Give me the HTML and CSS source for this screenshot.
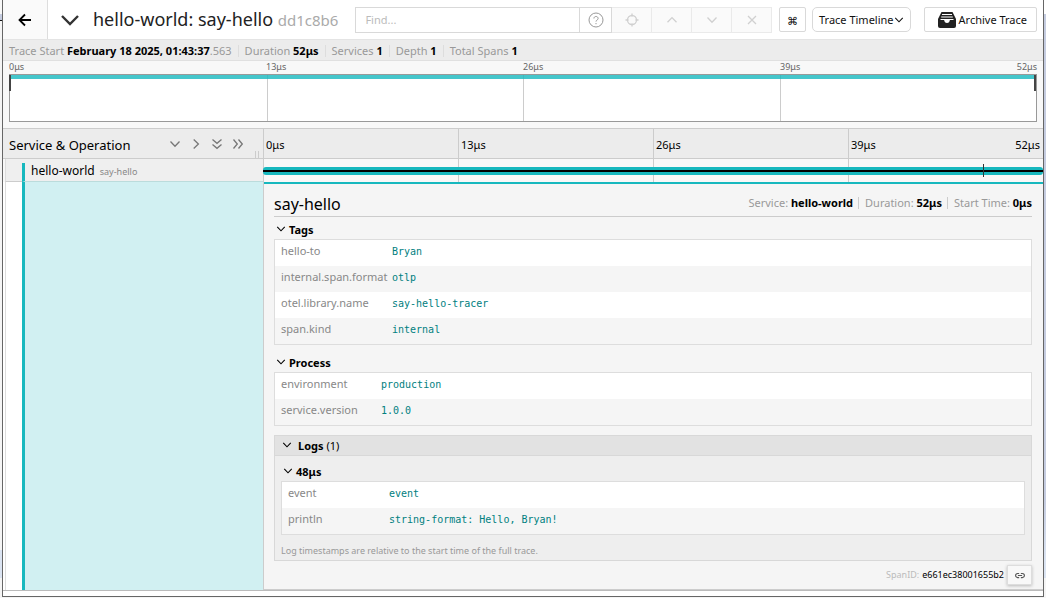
FILE: index.html
```html
<!DOCTYPE html>
<html lang="en">
<head>
<meta charset="utf-8">
<title>hello-world: say-hello</title>
<link rel="stylesheet" href="styles.css">
</head>
<body>
<svg class="defs" aria-hidden="true">
  <symbol id="down" viewBox="0 0 12 12"><path d="M1.5 3.5 6 8.2l4.500-4.700"/></symbol>
  <symbol id="up" viewBox="0 0 12 12"><path d="M1.500 8.300 6 3.600l4.500 4.700"/></symbol>
  <symbol id="right" viewBox="0 0 12 12"><path d="M3.700 1.500 8.400 6l-4.700 4.500"/></symbol>
  <symbol id="ddown" viewBox="0 0 12 12"><path d="M1.500 1.500 6 5.300l4.500-3.800M1.500 6.500 6 10.300l4.500-3.800"/></symbol>
  <symbol id="dright" viewBox="0 0 12 12"><path d="M1.500 1.500 5.300 6l-3.800 4.500M6.500 1.500 10.300 6l-3.800 4.500"/></symbol>
</svg>
<div class="window">
  <header class="top">
    <a class="back" href="#" aria-label="Back"><svg class="ico i14" viewBox="0 0 14 14"><path d="M13 7H1.500M7 1.500 1.500 7 7 12.500"/></svg></a>
    <button class="collapse" aria-label="Collapse header"><svg class="ico i20" viewBox="0 0 20 20"><path d="M2 6l8 8 8-8"/></svg></button>
    <h1 class="title">hello-world: say-hello <small>dd1c8b6</small></h1>
    <div class="search">
      <input class="find" type="text" placeholder="Find..." aria-label="Find">
      <button class="help" aria-label="Help"><svg class="ico i16" viewBox="0 0 16 16"><circle cx="8" cy="8" r="7"/><path d="M5.900 6.500c0-2.700 4.200-2.700 4.200 0 0 1.500-2.100 1.500-2.100 3.100M8 11v1.200"/></svg></button>
      <button class="nav" disabled aria-label="Locate"><svg class="ico i14" viewBox="0 0 14 14"><circle cx="7" cy="7" r="4.500"/><path d="M7 .5v3M7 10.500v3M.5 7h3M10.500 7h3"/></svg></button>
      <button class="nav" disabled aria-label="Previous"><svg class="ico i12"><use href="#up"/></svg></button>
      <button class="nav" disabled aria-label="Next"><svg class="ico i12"><use href="#down"/></svg></button>
      <button class="nav" disabled aria-label="Clear"><svg class="ico i12" viewBox="0 0 12 12"><path d="M2 2l8 8M10 2l-8 8"/></svg></button>
    </div>
    <button class="btn keys" aria-label="Keyboard shortcuts">⌘</button>
    <button class="btn view">Trace Timeline <svg class="ico i10"><use href="#down"/></svg></button>
    <button class="btn archive"><svg class="box" viewBox="0 0 18 16"><path d="M3.500 0h11L18 7v7q0 2-2 2H2q-2 0-2-2V7z" fill="#222"/><path d="M4 2.500h10M3.200 5h11.600M2.500 7.500h13" fill="none" stroke="#fff" stroke-width="1"/><path d="M6 7.500h6q-.5 3.500-3 3.500T6 7.500z" fill="#fff"/></svg>Archive Trace</button>
  </header>
  <ul class="info">
    <li>Trace Start <b>February 18 2025, 01:43:37</b>.563</li>
    <li>Duration <b>52μs</b></li>
    <li>Services <b>1</b></li>
    <li>Depth <b>1</b></li>
    <li>Total Spans <b>1</b></li>
  </ul>
  <section class="overview">
    <div class="labels"><span>0μs</span><span>13μs</span><span>26μs</span><span>39μs</span><span class="last">52μs</span></div>
    <div class="minimap"><i></i><i></i><i></i><i></i><div class="map-span"></div><div class="grip start"></div><div class="grip end"></div></div>
  </section>
  <main class="timeline">
    <div class="row head">
      <div class="name-head"><h2>Service &amp; Operation</h2>
        <div class="tools">
          <button aria-label="Collapse one"><svg class="ico i12"><use href="#down"/></svg></button>
          <button aria-label="Expand one"><svg class="ico i12"><use href="#right"/></svg></button>
          <button aria-label="Collapse all"><svg class="ico i12"><use href="#ddown"/></svg></button>
          <button aria-label="Expand all"><svg class="ico i12"><use href="#dright"/></svg></button>
        </div>
        <span class="resize"></span>
      </div>
      <div class="ticks"><span>0μs</span><span>13μs</span><span>26μs</span><span>39μs</span><span class="last">52μs</span></div>
    </div>
    <div class="row span-row">
      <div class="gutter"></div>
      <div class="span-name">hello-world <small>say-hello</small></div>
      <div class="ticks"><span></span><span></span><span></span><span></span><div class="bar"></div><div class="mark"></div></div>
    </div>
    <div class="row detail-row">
      <div class="gutter"></div>
      <div class="tint"></div>
      <article class="detail">
        <div class="detail-head"><h2>say-hello</h2>
          <ul><li>Service: <b>hello-world</b></li><li>Duration: <b>52μs</b></li><li>Start Time: <b>0μs</b></li></ul>
        </div>
        <button class="fold"><svg class="ico i10"><use href="#down"/></svg>Tags</button>
        <table class="kv tags">
          <tr><th>hello-to</th><td>Bryan</td></tr>
          <tr><th>internal.span.format</th><td>otlp</td></tr>
          <tr><th>otel.library.name</th><td>say-hello-tracer</td></tr>
          <tr><th>span.kind</th><td>internal</td></tr>
        </table>
        <button class="fold second"><svg class="ico i10"><use href="#down"/></svg>Process</button>
        <table class="kv process">
          <tr><th>environment</th><td>production</td></tr>
          <tr><th>service.version</th><td>1.0.0</td></tr>
        </table>
        <section class="logs">
          <button class="logs-head"><svg class="ico i10"><use href="#down"/></svg><b>Logs</b> (1)</button>
          <div class="logs-body">
            <button class="fold"><svg class="ico i10"><use href="#down"/></svg>48μs</button>
            <table class="kv log">
              <tr><th>event</th><td>event</td></tr>
              <tr><th>println</th><td>string-format: Hello, Bryan!</td></tr>
            </table>
            <p>Log timestamps are relative to the start time of the full trace.</p>
          </div>
        </section>
        <footer class="span-id"><span>SpanID:</span> e661ec38001655b2
          <button aria-label="Copy link"><svg class="ico link" viewBox="0 0 12 8"><path d="M5 1.500H3.200a2.500 2.500 0 0 0 0 5H5M7 1.500h1.800a2.500 2.500 0 0 1 0 5H7M3.500 4h5"/></svg></button>
        </footer>
      </article>
    </div>
  </main>
</div>
</body>
</html>
```
FILE: styles.css
```css
* { box-sizing: border-box; }
body {
  margin: 0; min-height: 100vh; padding: 0 2px 1px;
  display: flex;
  background:
    linear-gradient(#f8f8f8 14px, #c5cce0 14px, #c5cce0 20px, #111 20px, #111 21px, #f5f5f5 21px, #f5f5f5 550px, #dbe4f2 550px, #dbe4f2 578px, #f5f5f5 578px) left / 2px 100% no-repeat,
    linear-gradient(#fff 14px, #c5cce0 14px, #c5cce0 500px, #dbe4f2 560px, #dbe4f2 578px, #f5f5f5 578px);
  font: 12px/16px "Noto Sans", sans-serif; color: #000;
}
h1, h2, ul, p { margin: 0; padding: 0; font-weight: 400; }
ul { list-style: none; display: flex; }
button { font: inherit; color: inherit; background: none; border: 0; padding: 0; display: flex; align-items: center; }
.defs { display: none; }
.ico { display: block; fill: none; stroke: currentColor; stroke-width: 1.3; flex: none; }
.i10 { width: 10px; height: 10px; }
.i12 { width: 12px; height: 12px; }
.i14 { width: 14px; height: 14px; }
.i16 { width: 16px; height: 16px; }
.i20 { width: 20px; height: 20px; }
.window { flex: 1; min-width: 0; border: 1px solid #666; border-top: 0; background: #fff; }

.top { display: flex; align-items: center; height: 40px; padding-right: 6px; border-bottom: 1px solid #e4e4e4; }
.back { align-self: stretch; width: 45px; display: grid; place-items: center; background: #fafafa; border-right: 1px solid #ddd; color: #000; }
.back .ico { stroke-width: 1.8; }
.collapse { margin: 0 13px 0 12px; color: #333; }
.collapse .ico { stroke-width: 2.4; }
.title { font-size: 18px; line-height: 24px; white-space: nowrap; color: #222; }
.title small { font-size: 15px; color: #aaa; }
.search { flex: 1; display: flex; height: 26px; margin-left: 17px; min-width: 0; }
.find { flex: 1; min-width: 0; border: 1px solid #d9d9d9; padding: 0 9px; font: inherit; font-size: 11px; background: #fff; }
.find::placeholder { color: #bbb; opacity: 1; }
.search button { justify-content: center; border: 1px solid #d9d9d9; border-left: 0; }
.help { width: 32px; color: #999; }
.help .ico { stroke-width: 1; }
.search .nav { width: 40px; flex: none; color: #d0d0d0; background: #fafafa; border-color: #eaeaea; }
.btn { height: 25px; border: 1px solid #d9d9d9; border-radius: 2px; color: #111; background: #fff; white-space: nowrap; font-size: 11px; }
.keys { width: 27px; margin-left: 7px; padding-top: 2px; justify-content: center; }
.view { margin: 0 13px 0 6px; padding: 0 6px; gap: 0; border-radius: 5px; }
.archive { padding: 0 9px 0 13px; gap: 3px; }
.box { width: 18px; height: 16px; }

.info { height: 21px; align-items: center; padding: 1px 0 0 6px; background: #ececec; border-bottom: 1px solid #e0e0e0; color: #999; font-size: 11px; }
.info li + li { margin-left: 6px; padding-left: 6px; border-left: 1px solid #ddd; line-height: 12px; }
.info b, .detail-head b { color: #000; }

.overview { padding: 0 6px 6px; background: #f8f8f8; border-bottom: 1px solid #ccc; }
.labels, .ticks, .minimap { position: relative; display: grid; grid-template-columns: repeat(4, 1fr); }
.labels { font-size: 9px; line-height: 12px; padding-bottom: 1px; color: #666; }
.last { position: absolute; right: 0; top: 0; }
.minimap { height: 48px; border: 1px solid #999; background: #fff; }
.minimap i + i { border-left: 1px solid #ccc; }
.map-span { position: absolute; top: 0; left: 0; right: 0; height: 4px; background: #17b8be; opacity: .8; }
.grip { position: absolute; top: 0; width: 2px; height: 16px; background: #444; }
.start { left: -1px; }
.end { right: 0; }

.row { display: grid; grid-template-columns: 25% 1fr; }
.span-row, .detail-row { grid-template-columns: 19px calc(25% - 19px) 1fr; }
.head { height: 30px; background: #ececec; border-bottom: 1px solid #ccc; }
.name-head { display: flex; align-items: center; padding-left: 6px; }
.name-head h2 { flex: 1; font-size: 13px; white-space: nowrap; }
.tools { display: flex; gap: 9px; padding-bottom: 3px; color: #777; }
.resize { align-self: flex-end; width: 4px; height: 8px; margin: 0 4px 2px 11px; border: solid #ccc; border-width: 0 1px; }
.ticks { min-width: 0; }
.ticks span:not(.last) { border-left: 1px solid #ccc; padding-left: 2px; }
.head .ticks { font-size: 11px; line-height: 32px; }
.head .last { right: 3px; }
.gutter { margin-left: 2px; border-left: 1px solid #ddd; }
.span-row { height: 23px; background: #f8f8f8; }
.span-row .gutter { background: #efefef; border-bottom: 1px solid #ccc; }
.span-name { margin-top: 4px; padding-left: 6px; border-left: 3px solid #17b8be; border-bottom: 1px solid #bbdcdc; background: #efefef; line-height: 16px; box-shadow: 0 -4px #efefef; white-space: nowrap; }
.span-name small { margin-left: 2px; font-size: 9px; color: #888; }
.bar { position: absolute; left: 0; right: 0; top: 8px; height: 8px; border-radius: 3px; background: linear-gradient(#17b8be 3px, #000 3px, #000 5px, #17b8be 5px); }
.mark { position: absolute; left: 92.3%; top: 5px; width: 1px; height: 13px; background: #333; }
.tint { border-left: 3px solid #17b8be; background: #d1f0f2; }
.detail { min-width: 0; padding: 9px 11px 4px 10px; background: #f5f5f5; border: solid #ccc; border-width: 0 0 1px 1px; box-shadow: inset 0 2px #17b8be; }
.detail-row { border-bottom: 1px solid #bbb; }
.detail-head { display: flex; justify-content: space-between; align-items: center; height: 26px; border-bottom: 1px solid #ccc; }
.detail-head h2 { font-size: 16px; line-height: 24px; }
.detail-head ul { font-size: 11px; color: #999; padding-bottom: 2px; }
.detail-head li + li { margin-left: 5px; padding-left: 6px; border-left: 1px solid #ccc; line-height: 12px; align-self: center; }
.fold { height: 18px; margin-top: 4px; padding-left: 2px; gap: 3px; font-weight: 700; font-size: 11px; }
.fold .ico { margin-bottom: 3px; }
.second { margin-top: 9px; }
.kv { width: 100%; border: 1px solid #ddd; border-collapse: separate; border-spacing: 0; background: #fff; table-layout: fixed; }
.kv tr { height: 26px; }
.kv tr:nth-child(even) { background: #f5f5f5; }
.kv th { padding: 1px 0 6px 6px; text-align: left; font-weight: 400; font-size: 11px; color: #888; white-space: nowrap; }
.kv td { padding: 2px 0 4px; font: 10px/16px "DejaVu Sans Mono", monospace; color: teal; }
.tags th { width: 117px; }
.process th { width: 106px; }
.log th { width: 107px; }
.logs { margin-top: 9px; border: 1px solid #d8d8d8; background: #eee; }
.logs-head { width: 100%; height: 20px; padding-left: 7px; border-bottom: 1px solid #d8d8d8; background: #e2e2e2; font-size: 11px; }
.logs-head .ico { margin: 0 6px 2px 0; }
.logs-head b { margin-right: 3px; }
.logs-body { padding: 3px 6px; }
.logs-body p { margin-top: 9px; font-size: 9px; line-height: 13px; color: #999; }
.span-id { display: flex; align-items: center; justify-content: flex-end; gap: 3px; margin-top: 4px; font-size: 9px; }
.span-id span { color: #bbb; }
.span-id button { width: 25px; height: 20px; justify-content: center; color: #555; background: #f8f8f8; border: 1px solid #ddd; box-shadow: 0 1px 3px #bbb; }
.link { width: 10px; height: 7px; }
```
